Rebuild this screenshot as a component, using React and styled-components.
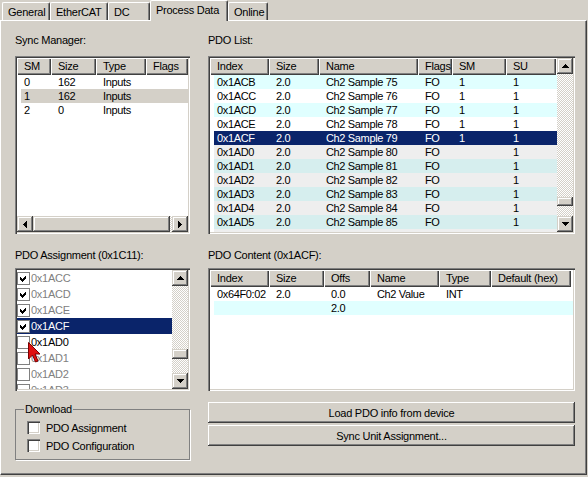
import React from "react";
import styled, { createGlobalStyle } from "styled-components";

const FACE = "#d4d0c8";
const NAVY = "#0a246a";
const CYAN = "#e0ffff";
const GREY_ROW = "#eeeeee";
const GREY_CYAN = "#d6eeee";

const GlobalStyle = createGlobalStyle`
  html, body { margin: 0; padding: 0; background: ${FACE}; }
  body {
    font: 11px "Liberation Sans", Arial, sans-serif;
    letter-spacing: -0.25px;
    color: #000;
  }
`;

const Window = styled.div`
  width: 588px;
  height: 477px;
  overflow: hidden;
  background: ${FACE};
`;

const TabStrip = styled.div`
  position: relative;
  z-index: 2;
  display: flex;
  align-items: flex-end;
  height: 20px;
  padding-left: 2px;
`;

const Tab = styled.div`
  box-sizing: border-box;
  flex: none;
  width: ${(p) => p.$w}px;
  height: ${(p) => (p.$active ? 21 : 18)}px;
  margin-bottom: ${(p) => (p.$active ? -1 : 0)}px;
  padding: 2px 0 0 5px;
  line-height: 14px;
  white-space: nowrap;
  background: ${FACE};
  border-top: 1px solid #fff;
  border-left: 1px solid #fff;
  border-right: 1px solid #404040;
  border-radius: 2px 2px 0 0;
  box-shadow: inset -1px 0 #808080;
`;

const Panel = styled.div`
  position: relative;
  z-index: 1;
  box-sizing: border-box;
  width: 587px;
  height: 455px;
  border: 1px solid;
  border-color: #fff #404040 #404040 #fff;
  box-shadow: inset -1px -1px #808080;
  padding: 12px 0 0 14px;
  display: flex;
  flex-direction: column;
`;

const Row = styled.div`
  display: flex;
  gap: 18px;
  margin-top: ${(p) => p.$top || 0}px;
`;

const Section = styled.div`
  display: flex;
  flex-direction: column;
  flex: none;
  width: ${(p) => p.$w}px;
`;

const Caption = styled.div`
  line-height: 14px;
  white-space: nowrap;
  margin-bottom: ${(p) => p.$gap}px;
`;

const Sunken = styled.div`
  position: relative;
  box-sizing: border-box;
  height: ${(p) => p.$h}px;
  padding: 2px;
  background: #fff;
  box-shadow: inset 1px 1px #808080, inset 2px 2px #404040,
    inset -1px -1px #fff, inset -2px -2px ${FACE};
  display: flex;
  flex-direction: ${(p) => (p.$col ? "column" : "row")};
  overflow: hidden;
`;

const ListBody = styled.div`
  flex: 1 1 0;
  min-width: 0;
  min-height: 0;
  display: flex;
  flex-direction: column;
  overflow: hidden;
`;

const HeaderBar = styled.div`
  display: flex;
  flex: none;
`;

const HeadCell = styled.div`
  box-sizing: border-box;
  flex: none;
  width: ${(p) => p.$w}px;
  height: 17px;
  line-height: 17px;
  padding-left: 7px;
  white-space: nowrap;
  overflow: hidden;
  background: ${FACE};
  box-shadow: inset 1px 1px #fff, inset -1px -1px #404040,
    inset -2px -2px #808080;
`;

const DataRow = styled.div`
  display: flex;
  flex: none;
  height: 14px;
  line-height: 14px;
  margin-left: 4px;
  background: ${(p) => p.$bg || "#fff"};
  color: ${(p) => p.$fg || "#000"};
`;

const Cell = styled.div`
  box-sizing: border-box;
  flex: none;
  width: ${(p) => p.$w}px;
  padding-left: ${(p) => (p.$first ? 3 : 7)}px;
  letter-spacing: -0.35px;
  white-space: nowrap;
  overflow: hidden;
`;

const VBar = styled.div`
  display: flex;
  flex-direction: column;
  flex: none;
  width: 16px;
`;

const HBar = styled.div`
  display: flex;
  flex: none;
  height: 16px;
`;

const Track = styled.div`
  flex: ${(p) => (p.$len ? `0 0 ${p.$len}px` : "1 1 0")};
  background: repeating-conic-gradient(#fff 0 25%, ${FACE} 0 50%) 0 0 / 2px 2px;
`;

const Raised = styled.div`
  flex: ${(p) => (p.$len ? `0 0 ${p.$len}px` : "1 1 0")};
  display: flex;
  align-items: center;
  justify-content: center;
  background: ${FACE};
  box-shadow: inset -1px -1px #404040, inset 1px 1px ${FACE},
    inset -2px -2px #808080, inset 2px 2px #fff;
`;

const AssignRow = styled.div`
  display: flex;
  align-items: center;
  flex: none;
  height: 16px;
  background: ${(p) => (p.$sel ? NAVY : "transparent")};
  color: ${(p) => (p.$sel ? "#fff" : p.$dim ? "#808080" : "#000")};
`;

const FlatBox = styled.div`
  box-sizing: border-box;
  flex: none;
  width: 13px;
  height: 13px;
  border: 1px solid #808080;
  background: #fff;
  margin-right: 1px;
  display: flex;
`;

const Cursor = styled.svg`
  position: absolute;
  left: 12px;
  top: 73px;
`;

const GroupBox = styled.fieldset`
  box-sizing: border-box;
  flex: none;
  width: 175px;
  margin: 0;
  padding: 3px 0 5px 8px;
  border: 1px solid #808080;
  box-shadow: 1px 1px 0 #fff;
  display: flex;
  flex-direction: column;
  gap: 1px;
`;

const Legend = styled.legend`
  padding: 0 1px;
  line-height: 14px;
`;

const CheckRow = styled.label`
  display: flex;
  align-items: center;
  height: 17px;
  margin-left: 3px;
  gap: 6px;
  white-space: nowrap;
`;

const Box3D = styled.span`
  flex: none;
  width: 13px;
  height: 13px;
  background: #fff;
  box-shadow: inset 1px 1px #808080, inset 2px 2px #404040,
    inset -1px -1px #fff, inset -2px -2px ${FACE};
`;

const ButtonStack = styled.div`
  display: flex;
  flex-direction: column;
  gap: 2px;
  width: 367px;
`;

const PushButton = styled.button`
  height: 21px;
  padding: 0;
  border: none;
  font: inherit;
  letter-spacing: inherit;
  color: #000;
  background: ${FACE};
  box-shadow: inset -1px -1px #404040, inset 1px 1px #fff,
    inset -2px -2px #808080, inset 2px 2px ${FACE};
`;

// 1px-exact classic scroll arrows
function Arrow({ dir }) {
  const widths = [1, 3, 5, 7];
  const vertical = dir === "up" || dir === "down";
  const rows = dir === "down" || dir === "right" ? [...widths].reverse() : widths;
  return (
    <svg width={vertical ? 7 : 4} height={vertical ? 4 : 7} shapeRendering="crispEdges">
      {rows.map((w, i) =>
        vertical ? (
          <rect key={i} x={(7 - w) / 2} y={i} width={w} height={1} fill="#000" />
        ) : (
          <rect key={i} x={i} y={(7 - w) / 2} width={1} height={w} fill="#000" />
        )
      )}
    </svg>
  );
}

function Check() {
  return (
    <svg width="11" height="11" viewBox="0 0 11 11" shapeRendering="crispEdges">
      <polygon points="2,4 4,6 8,2 8,5 4,9 2,7" fill="#000" />
    </svg>
  );
}

function ListView({ cols, heads, rows }) {
  return (
    <ListBody>
      <HeaderBar>
        {heads.map((h, i) => (
          <HeadCell key={i} $w={cols[i]}>
            {h}
          </HeadCell>
        ))}
      </HeaderBar>
      {rows.map((r, ri) => (
        <DataRow key={ri} $bg={r.bg} $fg={r.fg}>
          {r.cells.map((c, ci) => (
            <Cell key={ci} $w={ci === 0 ? cols[0] - 4 : cols[ci]} $first={ci === 0}>
              {c}
            </Cell>
          ))}
        </DataRow>
      ))}
    </ListBody>
  );
}

const smRows = [
  { cells: ["0", "162", "Inputs", ""] },
  { cells: ["1", "162", "Inputs", ""], bg: FACE },
  { cells: ["2", "0", "Inputs", ""] },
];

// index 0x1ACB is sample 75, each following index one more
const pdo = (n, sm, bg, fg) => ({
  cells: ["0x1A" + n, "2.0", "Ch2 Sample " + (parseInt(n, 16) - 0xcb + 75), "FO", sm, "1"],
  bg,
  fg,
});

const pdoRows = [
  pdo("CB", "1", CYAN),
  pdo("CC", "1", "#fff"),
  pdo("CD", "1", CYAN),
  pdo("CE", "1", "#fff"),
  pdo("CF", "1", NAVY, "#fff"),
  pdo("D0", "", GREY_ROW),
  pdo("D1", "", GREY_CYAN),
  pdo("D2", "", GREY_ROW),
  pdo("D3", "", GREY_CYAN),
  pdo("D4", "", GREY_ROW),
  pdo("D5", "", GREY_CYAN),
  pdo("D6", "", GREY_ROW),
];

const contentRows = [
  { cells: ["0x64F0:02", "2.0", "0.0", "Ch2 Value", "INT", ""] },
  { cells: ["", "", "2.0", "", "", ""], bg: CYAN },
];

const assignments = [
  { id: "0x1ACC", on: true, dim: true },
  { id: "0x1ACD", on: true, dim: true },
  { id: "0x1ACE", on: true, dim: true },
  { id: "0x1ACF", on: true, sel: true },
  { id: "0x1AD0", on: false },
  { id: "0x1AD1", on: false, dim: true },
  { id: "0x1AD2", on: false, dim: true },
  { id: "0x1AD3", on: false, dim: true },
];

const tabs = [
  { label: "General", w: 48 },
  { label: "EtherCAT", w: 58 },
  { label: "DC", w: 42 },
  { label: "Process Data", w: 78, active: true },
  { label: "Online", w: 40 },
];

export default function App() {
  return (
    <Window>
      <GlobalStyle />
      <TabStrip>
        {tabs.map((t) => (
          <Tab key={t.label} $w={t.w} $active={t.active}>
            {t.label}
          </Tab>
        ))}
      </TabStrip>
      <Panel>
        <Row>
          <Section $w={175}>
            <Caption $gap={9}>Sync Manager:</Caption>
            <Sunken $h={178} $col>
              <ListView cols={[34, 45, 50, 42]} heads={["SM", "Size", "Type", "Flags"]} rows={smRows} />
              <HBar>
                <Raised $len={16}>
                  <Arrow dir="left" />
                </Raised>
                <Raised />
                <Track $len={2} />
                <Raised $len={16}>
                  <Arrow dir="right" />
                </Raised>
              </HBar>
            </Sunken>
          </Section>
          <Section $w={367}>
            <Caption $gap={9}>PDO List:</Caption>
            <Sunken $h={178}>
              <ListView
                cols={[59, 50, 99, 34, 54, 50]}
                heads={["Index", "Size", "Name", "Flags", "SM", "SU"]}
                rows={pdoRows}
              />
              <VBar>
                <Raised $len={16}>
                  <Arrow dir="up" />
                </Raised>
                <Track />
                <Raised $len={9} />
                <Track $len={10} />
                <Raised $len={16}>
                  <Arrow dir="down" />
                </Raised>
              </VBar>
            </Sunken>
          </Section>
        </Row>

        <Row $top={14}>
          <Section $w={175}>
            <Caption $gap={6}>PDO Assignment (0x1C11):</Caption>
            <Sunken $h={123}>
              <ListBody>
                {assignments.map((a) => (
                  <AssignRow key={a.id} $sel={a.sel} $dim={a.dim}>
                    <FlatBox>{a.on && <Check />}</FlatBox>
                    {a.id}
                  </AssignRow>
                ))}
              </ListBody>
              <VBar>
                <Raised $len={16}>
                  <Arrow dir="up" />
                </Raised>
                <Track />
                <Raised $len={10} />
                <Track $len={14} />
                <Raised $len={16}>
                  <Arrow dir="down" />
                </Raised>
              </VBar>
              <Cursor width="14" height="23" viewBox="0 0 14 23">
                <path
                  d="M1.5 1.5 L1.5 18 L5.5 14 L8.5 21 L11 20 L8 13 L13 13 Z"
                  fill="#e01010"
                  stroke="#7a0000"
                  strokeWidth="1"
                  strokeLinejoin="miter"
                />
              </Cursor>
            </Sunken>
          </Section>
          <Section $w={367}>
            <Caption $gap={6}>PDO Content (0x1ACF):</Caption>
            <Sunken $h={123}>
              <ListView
                cols={[59, 55, 46, 69, 52, 80]}
                heads={["Index", "Size", "Offs", "Name", "Type", "Default (hex)"]}
                rows={contentRows}
              />
            </Sunken>
          </Section>
        </Row>

        <Row $top={11}>
          <GroupBox>
            <Legend>Download</Legend>
            <CheckRow>
              <Box3D />
              PDO Assignment
            </CheckRow>
            <CheckRow>
              <Box3D />
              PDO Configuration
            </CheckRow>
          </GroupBox>
          <ButtonStack>
            <PushButton>Load PDO info from device</PushButton>
            <PushButton>Sync Unit Assignment...</PushButton>
          </ButtonStack>
        </Row>
      </Panel>
    </Window>
  );
}
